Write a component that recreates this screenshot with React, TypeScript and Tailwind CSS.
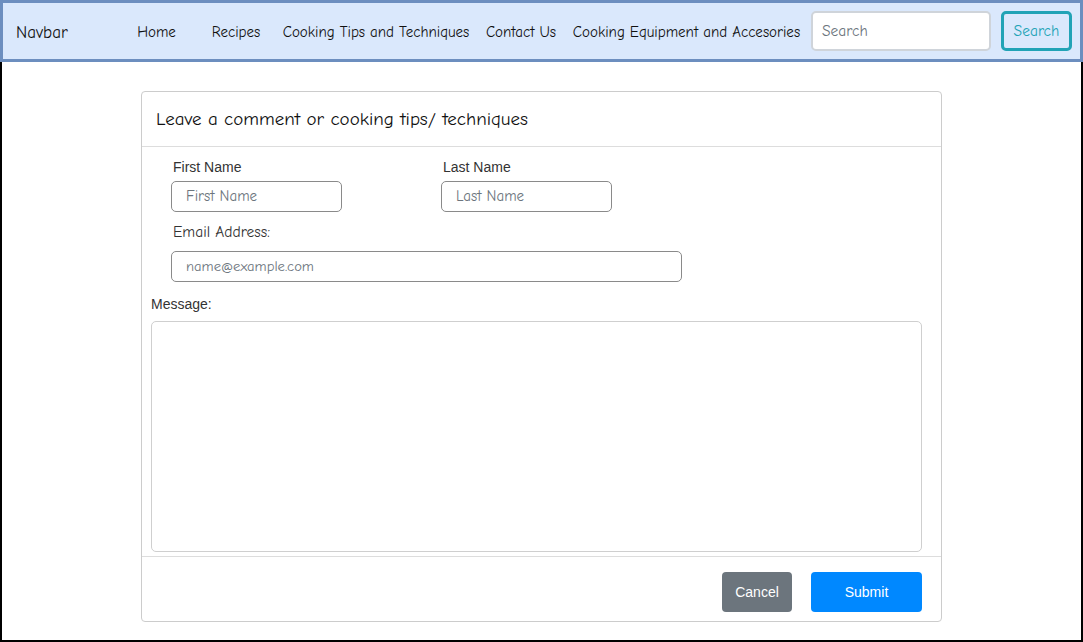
import React from "react";

const comic = "font-['Comic_Sans_MS','Comic_Neue','DejaVu_Sans',sans-serif]";
const arial = "font-['Liberation_Sans',Arial,sans-serif]";

export default function App() {
  const links = [
    { t: "Home", w: "w-[73px]" },
    { t: "Recipes", w: "w-[86px]" },
    { t: "Cooking Tips and Techniques", w: "w-[194px]" },
    { t: "Contact Us", w: "w-[96px]" },
    { t: "Cooking Equipment and Accesories", w: "w-[235px]" },
  ];
  return (
    <div className="w-[1083px] h-[642px] bg-white overflow-hidden">
      <nav className={`h-[62px] border-[3px] border-[#6c8ebf] bg-[#dae8fc] flex items-center ${comic} text-[15px] text-[#111]`}>
        <div className="w-[117px] pl-[13px] pt-[3px] text-[17px]">Navbar</div>
        {links.map((l) => (
          <div key={l.t} className={`${l.w} text-center whitespace-nowrap pt-[3px]`}>
            {l.t}
          </div>
        ))}
        <div className="ml-[7px] w-[180px] h-[40px] bg-white border-2 border-[#cfd4da] rounded-[5px] flex items-center pl-[9px] pt-[1px] text-[15.5px] text-[#6c757d]">
          Search
        </div>
        <div className="ml-[10px] w-[71px] h-[40px] border-[3px] border-[#21a3b6] rounded-[5px] flex items-center justify-center pt-[1px] text-[15.5px] text-[#21a3b6]">
          Search
        </div>
      </nav>
      <div className="h-[580px] border-l-2 border-r-2 border-b-2 border-black pt-[29px]">
        <div className="ml-[139px] w-[801px] h-[531px] border border-[#cccccc] rounded-[4px] flex flex-col">
          <div className={`h-[55px] border-b border-[#dddddd] flex items-center pl-[14px] ${comic} text-[19px] text-[#111]`}>
            Leave a comment or cooking tips/ techniques
          </div>
          <div className="flex-1 pl-[9px] pr-[19px]">
            <div className="pl-[20px] flex mt-[11px]">
              <div className="w-[270px]">
                <div className={`${arial} text-[14px] text-[#333] pl-[2px] h-[19px] leading-[19px]`}>First Name</div>
                <div className={`mt-[4px] w-[171px] h-[31px] border border-[#8a8a8a] rounded-[5px] flex items-center pl-[14px] ${comic} text-[15px] text-[#6c757d]`}>
                  First Name
                </div>
              </div>
              <div>
                <div className={`${arial} text-[14px] text-[#333] pl-[2px] h-[19px] leading-[19px]`}>Last Name</div>
                <div className={`mt-[4px] w-[171px] h-[31px] border border-[#8a8a8a] rounded-[5px] flex items-center pl-[14px] ${comic} text-[15px] text-[#6c757d]`}>
                  Last Name
                </div>
              </div>
            </div>
            <div className="pl-[20px]">
              <div className={`mt-[11px] pl-[2px] h-[19px] leading-[19px] ${comic} text-[15.5px] text-[#333]`}>Email Address:</div>
              <div className={`mt-[9px] w-[511px] h-[31px] border border-[#8a8a8a] rounded-[5px] flex items-center pl-[14px] ${comic} text-[14.6px] text-[#6c757d]`}>
                name@example.com
              </div>
            </div>
            <div className={`mt-[13px] h-[19px] leading-[19px] ${arial} text-[14px] text-[#333]`}>Message:</div>
            <div className="mt-[7px] w-[771px] h-[231px] border border-[#cfcfcf] rounded-[5px]"></div>
          </div>
          <div className="h-[65px] border-t border-[#dddddd] flex items-start justify-end pr-[19px] pt-[15px]">
            <div className={`w-[70px] h-[40px] bg-[#6c757d] rounded-[4px] flex items-center justify-center text-white ${arial} text-[14px]`}>Cancel</div>
            <div className={`ml-[19px] w-[111px] h-[40px] bg-[#0088ff] rounded-[4px] flex items-center justify-center text-white ${arial} text-[14px]`}>Submit</div>
          </div>
        </div>
      </div>
    </div>
  );
}
